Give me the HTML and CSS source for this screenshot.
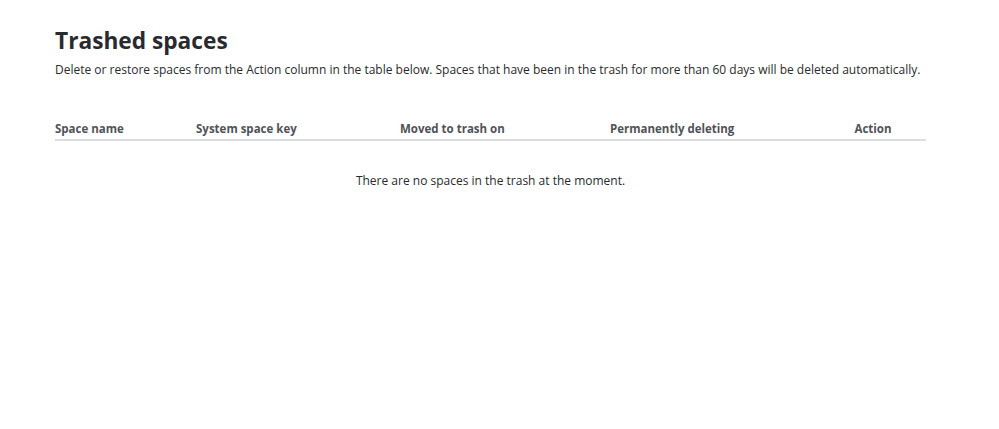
FILE: index.html
```html
<!doctype html>
<html lang="en">
  <head>
    <meta charset="utf-8" />
    <title>Trashed spaces</title>
    <link rel="stylesheet" href="styles.css">
  </head>
  <body>
    <main class="page">
      <header class="page-header">
        <h1>Trashed spaces</h1>
        <p>Delete or restore spaces from the Action column in the table below. Spaces that have been in the trash for more than 60 days will be deleted automatically.</p>
      </header>
      <table class="trash-table">
        <colgroup>
          <col class="col-name" />
          <col class="col-key" />
          <col class="col-moved" />
          <col class="col-deleting" />
          <col class="col-action" />
        </colgroup>
        <thead>
          <tr>
            <th>Space name</th>
            <th>System space key</th>
            <th>Moved to trash on</th>
            <th>Permanently deleting</th>
            <th class="action">Action</th>
          </tr>
        </thead>
        <tbody>
          <tr>
            <td colspan="5" class="empty">There are no spaces in the trash at the moment.</td>
          </tr>
        </tbody>
      </table>
    </main>
  </body>
</html>
```

FILE: styles.css
```css
body {
  margin: 0;
  background: #fff;
  color: #292a2e;
  font-family: "Open Sans", "Noto Sans", sans-serif;
}
.page {
  padding: 26px 73px 0 55px;
}
.page-header {
  h1 {
    margin: 0;
    font-size: 22.7px;
    font-weight: 700;
    line-height: 30px;
    color: #292a2e;
  }
  p {
    margin: 4px 0 0;
    font-size: 12px;
    line-height: 20px;
    color: #292a2e;
  }
}
.trash-table {
  width: 100%;
  margin-top: 36px;
  border-collapse: collapse;
  table-layout: fixed;
}
.col-name {
  width: 141px;
}
.col-key {
  width: 204px;
}
.col-moved {
  width: 210px;
}
.col-deleting {
  width: 210px;
}
th {
  padding: 4px 0 1px;
  text-align: left;
  font-size: 11.5px;
  font-weight: 700;
  line-height: 18px;
  color: #505258;
  border-bottom: 2px solid #dddee1;
}
th.action {
  text-align: center;
}
.empty {
  padding: 30px 0;
  text-align: center;
  font-size: 12px;
  line-height: 20px;
  color: #292a2e;
}
```
